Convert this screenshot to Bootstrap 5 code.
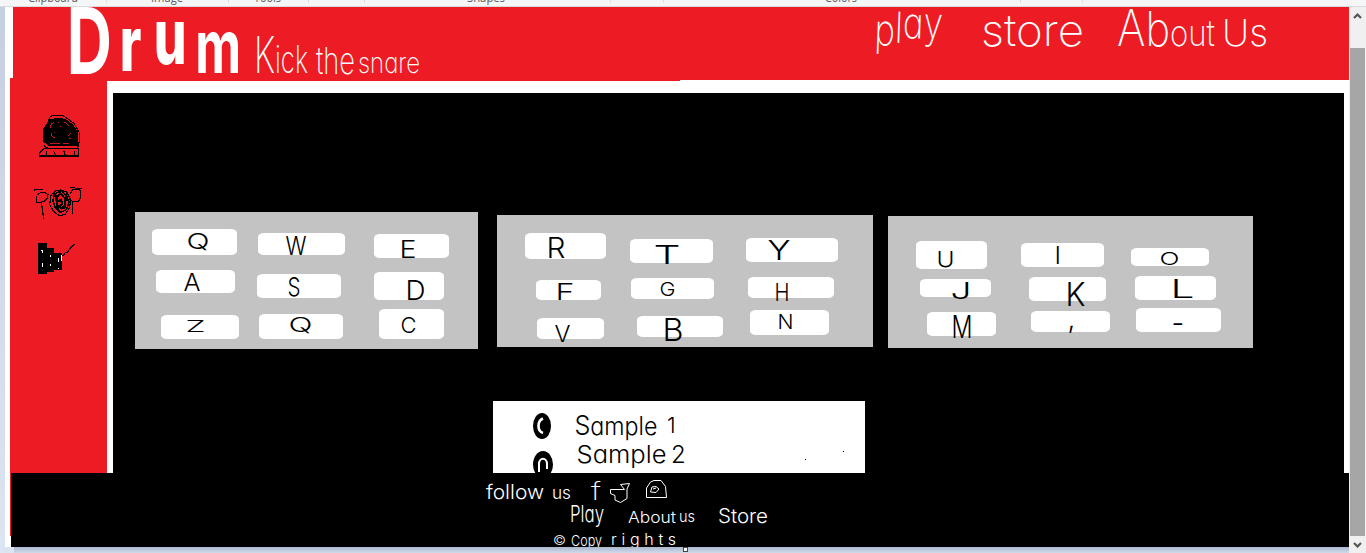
<!DOCTYPE html>
<html lang="en">
<head>
<meta charset="utf-8">
<meta name="viewport" content="width=device-width, initial-scale=1">
<title>Drum - Kick the snare</title>
<link href="https://cdn.jsdelivr.net/npm/bootstrap@5.3.0/dist/css/bootstrap.min.css" rel="stylesheet">
<style>
  body { width: 1366px; height: 553px; overflow: hidden; background: #dbe5f1; font-family: Inter, "Liberation Sans", sans-serif; }
  svg { display: block; flex: none; }
  svg text { font-family: Inter, "Liberation Sans", sans-serif; font-weight: 300; font-feature-settings: "cv11"; }
  .ribbon { height: 7px; background: #f5f6f7; border-bottom: 1px solid #dadbdc; }
  .ribbon text { font: 400 12px "Open Sans", sans-serif; fill: #5a5a5e; }
  .gutter { width: 5px; background: linear-gradient(#c5cfe2, #dce6f2); }
  .workspace { height: 546px; }
  .sheet { width: 1344px; height: 540px; background: #fff; }
  .red { background: #ed1c24; }
  .site-head { margin-left: 8px; height: 73px; }
  .site-head text { fill: #fff; font-weight: 200; }
  .site-head .logo { font-weight: 800; }
  .head-lip { margin-left: 8px; width: 667px; height: 1px; }
  .middle { height: 392px; }
  .side { width: 97px; height: 395px; margin: -3px 0 0 5px; }
  .stage { width: 1231px; height: 380px; margin: 12px 0 0 6px; background: #000; }
  .pads { height: 256px; }
  .pad { background: #c3c3c3; }
  .key { flex: none; background: #fff; border: 0; border-radius: 6px / 4px; line-height: 1; }
  .key svg { overflow: visible; }
  .key text { fill: #000; font-weight: 300; }
  .samples { width: 372px; height: 72px; margin: 52px 0 0 380px; background: #fff; }
  .foot { height: 74px; }
  .foot-edge { width: 1px; height: 63px; margin-left: 5px; }
  .foot-box { width: 1338px; height: 74px; background: #000; }
  .foot-box text { fill: #fff; font-weight: 300; }
  .under { height: 6px; margin-left: 9px; background: linear-gradient(#abb7cd, #cfdaea); }
  .grip { width: 5px; height: 5px; margin-left: 669px; background: #fff; border: 1px solid #444; }
  .scroll { width: 17px; background: #f0f0f0; padding-left: 1px; }
  .thumb { width: 15px; height: 488px; background: #a6a6a6; }
</style>
</head>
<body>
<div class="ribbon">
  <svg width="1366" height="6" viewBox="0 0 1366 6">
    <g>
      <text x="28" y="1.7" textLength="50" lengthAdjust="spacingAndGlyphs">Clipboard</text>
      <text x="151" y="1.7" textLength="32" lengthAdjust="spacingAndGlyphs">Image</text>
      <text x="254" y="1.7" textLength="27" lengthAdjust="spacingAndGlyphs">Tools</text>
      <text x="467" y="1.7" textLength="38" lengthAdjust="spacingAndGlyphs">Shapes</text>
      <text x="825" y="1.7" textLength="32" lengthAdjust="spacingAndGlyphs">Colors</text>
    </g>
    <path d="M106.500 0v3M228.500 0v3M308.500 0v3M364.500 0v3M610.500 0v3M663.500 0v3M1020.500 0v3M1082.500 0v3" stroke="#dcdddf"/>
  </svg>
</div>
<div class="workspace d-flex">
  <div class="gutter"></div>
  <div class="d-flex flex-column">
    <div class="sheet">
      <header class="site-head red d-flex">
        <svg width="667" height="73" viewBox="13 7 667 73">
          <g transform="scale(.68 1)"><text class="logo" y="74"><tspan x="98" font-size="92" font-weight="700">D</tspan><tspan font-size="76" x="176" y="71">r</tspan><tspan font-size="76" x="226" y="64">u</tspan><tspan font-size="74" x="287" y="73" font-weight="700">m</tspan></text></g>
          <text x="254" y="73" textLength="54" lengthAdjust="spacingAndGlyphs" font-size="38"><tspan font-size="50">K</tspan>ick</text>
          <text x="316" y="74" textLength="39" lengthAdjust="spacingAndGlyphs" font-size="37">the</text>
          <text x="358" y="73" textLength="62" lengthAdjust="spacingAndGlyphs" font-size="29">snare</text>
        </svg>
        <svg width="669" height="73" viewBox="680 7 669 73">
          <text transform="rotate(2 876 44)" x="874" y="43" textLength="68" lengthAdjust="spacingAndGlyphs" font-size="43"><tspan dy="2">p</tspan><tspan dy="-3">l</tspan><tspan dy="-5">a</tspan><tspan dy="-1">y</tspan></text>
          <text x="981" y="46" textLength="103" lengthAdjust="spacingAndGlyphs" font-size="44">store</text>
          <text x="1117" y="46" textLength="98" lengthAdjust="spacingAndGlyphs" font-size="36"><tspan font-size="50">A</tspan><tspan font-size="48">b</tspan>out</text>
          <text x="1222" y="46" textLength="46" lengthAdjust="spacingAndGlyphs" font-size="37">Us</text>
        </svg>
      </header>
      <div class="head-lip red"></div>
      <div class="middle d-flex">
        <aside class="side red">
          <svg width="97" height="395" viewBox="10 78 97 395" shape-rendering="crispEdges">
            <g transform="translate(0 100) scale(.33333)" fill="none" stroke="#000" stroke-width="3.600">
              <path d="M119 168H236V146H132L119 159ZM139 154V172M160 152L168 168M192 154L196 168M223 152V168M132 137L143 145M135 90L150 51L158 46H186L200 54L222 70L238 98V124L233 145"/>
              <path d="M132 84L143 72L150 60L169 56H185L201 62L219 76L231 94V135H146L131 124Z" fill="#000"/>
              <path d="M150 84L154 72L163 66M175 67h3M181 79h3M193 66L207 77M154 98V107L164 114M165 96V100M204 107L213 99M206 115H214M150 132H180M188 132H207" stroke="#ed1c24" stroke-width="2.500"/>
              <path d="M102 271L108 268H130M210 263H222L228 265H245M111 285L121 278H135L144 284L141 295L132 305L110 308V287M123 308L127 325L131 358M211 282L217 270L225 268H238L242 273V291L237 303L219 305L207 296M217 305V341M153 285L167 273L183 270L201 277L213 301L207 326L195 343L178 347L160 334L149 313Z"/>
              <path d="M163 282L183 273L198 285L207 307L199 329L182 337L166 325L159 302Z" stroke-width="5"/>
              <path d="M170 292L182 281L195 296V316L185 326L170 314ZM174 305L183 299L187 312L177 319M166 281L174 332M200 280L193 328" stroke-width="6"/>
              <path d="M114 430H141V445H162V460H186V510H162V516H141V521H114Z" fill="#000" stroke="none"/>
              <path d="M188 468L195 459L202 456L212 444L224 432"/>
              <path d="M122 451H128V459M127 488V501M152 465V471M152 493V499M176 474V486M184 465V483M175 503V508" stroke="#fff" stroke-width="3"/>
            </g>
          </svg>
        </aside>
        <main class="stage">
          <div class="pads d-flex align-items-start" id="pads"></div>
          <div class="samples">
            <svg width="372" height="72" viewBox="493 401 372 72">
              <ellipse cx="542" cy="426" rx="9" ry="13"/>
              <path d="M543 418.500C537 421 537 431 543 433" fill="none" stroke="#fff" stroke-width="2.600"/>
              <ellipse cx="543" cy="464.500" rx="10" ry="13.500"/>
              <path d="M539 472V464C539 457 547 457 547 464V469" fill="none" stroke="#fff" stroke-width="2"/>
              <path d="M805 459h1v1h-1zM843 451h1v1h-1z"/>
              <text x="574.500" y="435" font-size="25" textLength="83" lengthAdjust="spacingAndGlyphs"><tspan font-size="27">S</tspan>ample</text>
              <text x="667" y="433" font-size="22">1</text>
              <text x="576.500" y="463" font-size="24" textLength="90" lengthAdjust="spacingAndGlyphs">Sample</text>
              <text x="671" y="463" font-size="24">2</text>
            </svg>
          </div>
        </main>
      </div>
      <footer class="foot d-flex">
        <div class="foot-edge red"></div>
        <div class="foot-box">
          <svg width="1338" height="74" viewBox="11 473 1338 74">
            <text x="486" y="499" font-size="20" textLength="58" lengthAdjust="spacingAndGlyphs">follow</text>
            <text x="552" y="499" font-size="17" textLength="19" lengthAdjust="spacingAndGlyphs">us</text>
            <text x="591" y="500" font-size="24" textLength="10" lengthAdjust="spacingAndGlyphs" style="font-weight:200">f</text>
            <g fill="none" stroke="#fff">
              <path d="M610.500 489.500H624.500L620.500 484.500L629.500 483.500L627 489V498.500L620.500 502.500L615 500V495.500L610.500 493.500Z"/>
              <path d="M646.500 497.500V488L650.500 482L654 480.500H661L665.500 486.500L666.500 497.500ZM650.500 492L652 487L656 486.500L659 489L656 492.500ZM653 489L656 488"/>
            </g>
            <text x="570" y="522" font-size="23" textLength="34" lengthAdjust="spacingAndGlyphs">Play</text>
            <text x="628" y="523" font-size="16.500" textLength="48" lengthAdjust="spacingAndGlyphs">About</text>
            <text x="679" y="522" font-size="16" textLength="16" lengthAdjust="spacingAndGlyphs">us</text>
            <text x="718" y="523" font-size="20" textLength="50" lengthAdjust="spacingAndGlyphs">Store</text>
            <text x="553" y="544.500" font-size="13" textLength="13" lengthAdjust="spacingAndGlyphs">©</text>
            <text x="571" y="545.500" font-size="15" textLength="31" lengthAdjust="spacingAndGlyphs">Copy</text>
            <text x="611" y="545" font-size="16" textLength="65">rights</text>
          </svg>
        </div>
      </footer>
    </div>
    <div class="under"><div class="grip"></div></div>
  </div>
  <div class="scroll">
    <svg width="15" height="41" viewBox="0 0 15 41"><path d="M4 11L7.500 7.500L11 11" fill="none" stroke="#555" stroke-width="2.200"/></svg>
    <div class="thumb"></div>
    <svg width="15" height="17" viewBox="0 0 15 17"><path d="M4 7L7.500 10.500L11 7" fill="none" stroke="#555" stroke-width="2.200"/></svg>
  </div>
</div>
<script src="https://cdn.jsdelivr.net/npm/bootstrap@5.3.0/dist/js/bootstrap.bundle.min.js"></script>
<script>
  // Each key: label, box left/top/right/bottom, then label left/top/right/bottom.
  const pads = [
    { x: 135, y: 212, w: 343, h: 137, cols: [
      [['Q',152,229,237,255,188,233,208,249],['A',156,270,235,293,185,273,199,291],['Z',161,315,239,339,187,320,204,332]],
      [['W',258,233,345,255,287,236,305,255],['S',257,274,341,298,289,277,299,296],['Q',259,314,343,339,290,317,311,332]],
      [['E',374,234,449,258,401,240,415,258],['D',374,272,444,300,407,280,424,300],['C',379,309,444,339,402,317,415,333]] ] },
    { x: 497, y: 215, w: 376, h: 132, cols: [
      [['R',525,233,606,259,548,237,564,258],['F',536,280,601,300,557,283,573,300],['V',537,318,604,339,556,325,569,342]],
      [['T',630,239,713,263,655,245,679,264],['G',631,278,714,299,661,282,674,296],['B',637,316,723,337,664,318,682,341]],
      [['Y',746,238,838,262,769,240,789,260],['H',748,277,834,298,776,283,788,301],['N',750,310,829,335,779,314,792,329]] ] },
    { x: 888, y: 216, w: 365, h: 132, cols: [
      [['U',916,241,987,269,938,251,953,267],['J',920,279,991,297,952,282,970,299],['M',927,312,996,336,953,315,971,338]],
      [['I',1021,243,1104,267,1056,246,1060,264],['K',1029,277,1106,301,1067,282,1084,306],[',',1031,311,1110,332,1069,321,1080,332]],
      [['O',1131,248,1209,266,1161,252,1178,265],['L',1135,276,1216,300,1172,279,1193,298],['-',1136,308,1221,332,1173,322,1184,325]] ] }
  ];
  let edge = 113, html = '';
  for (const p of pads) {
    html += `<section class="pad d-flex flex-shrink-0" style="width:${p.w}px;height:${p.h}px;margin:${p.y - 93}px 0 0 ${p.x - edge}px">`;
    p.cols.forEach((col, i) => {
      let top = p.y;
      html += '<div class="col-4 d-flex flex-column align-items-start">';
      for (const [t, l, y, r, b, a, c, d, e] of col) {
        const mark = t === ',' || t === '-';
        const size = mark ? 28 : (e - c) / .727;
        const fit = mark || t === 'I' ? '' : `textLength="${d - a + 3}" lengthAdjust="spacingAndGlyphs"`;
        const base = t === ',' ? 328 : t === '-' ? 333 : e;
        html += `<button class="key btn p-0" style="width:${r - l}px;height:${b - y}px;margin:${y - top}px 0 0 ${l - p.x - i * p.w / 3}px">` +
          `<svg width="${r - l}" height="${b - y}"><text x="${a - l - 1.5}" y="${base - y}" font-size="${size}" ${fit}>${t}</text></svg></button>`;
        top = b;
      }
      html += '</div>';
    });
    html += '</section>';
    edge = p.x + p.w;
  }
  document.getElementById('pads').innerHTML = html;
</script>
</body>
</html>
